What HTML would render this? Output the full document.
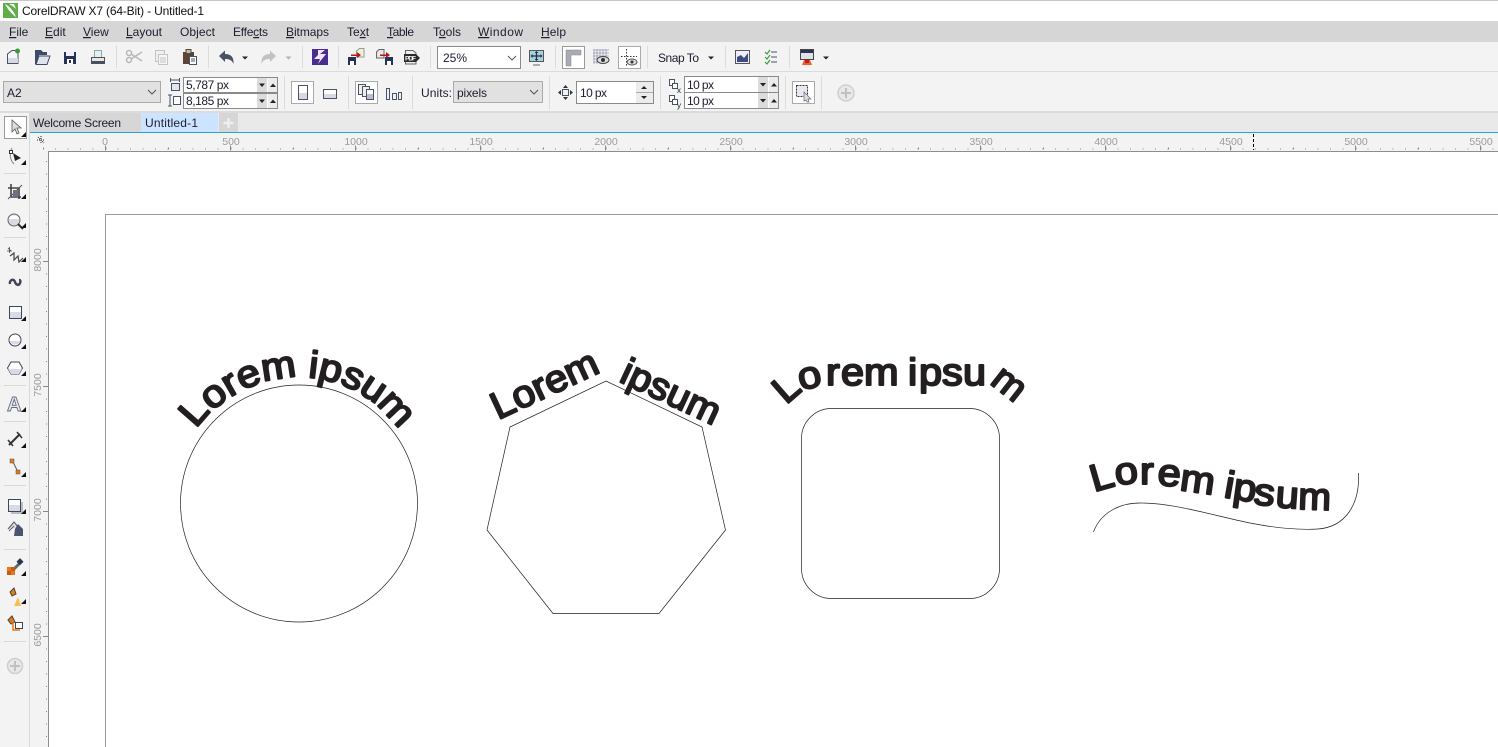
<!DOCTYPE html>
<html><head><meta charset="utf-8"><title>CorelDRAW X7</title>
<style>
html,body{margin:0;padding:0;background:#fff;overflow:hidden;width:1498px;height:747px}
svg{display:block;font-family:"Liberation Sans",sans-serif;overflow:hidden}
.m{font-size:12px;fill:#1c1c30}
.r{font-size:10.500px;fill:#9b9b9b;text-anchor:middle}
.t{font-size:12px;fill:#1c1c30}
.big text{font-size:38px;fill:#231f20;stroke:#231f20;stroke-width:2;stroke-linejoin:round;stroke-linecap:round}
.bm text{text-anchor:middle}
.s{stroke:#dcdcdc;stroke-width:1}
</style></head><body>
<svg width="1498" height="747" viewBox="0 0 1498 747" xmlns="http://www.w3.org/2000/svg">
<rect width="1498" height="747" fill="#fff"/>
<!-- chrome bands -->
<rect y="0" width="1498" height="1" fill="#c8c8c8"/>
<rect y="21" width="1498" height="21" fill="#d6d6d6"/>
<rect y="42" width="1498" height="29" fill="#f3f3f3"/>
<rect y="71" width="1498" height="1" fill="#dcdcdc"/>
<rect y="72" width="1498" height="40" fill="#f3f3f3"/>
<rect y="111" width="1498" height="2" fill="#dcdcdc"/>
<rect y="113" width="1498" height="19" fill="#e9e9e9"/>
<rect y="132" x="30" width="1468" height="1" fill="#1ea5e8"/>
<rect y="133" x="30" width="1468" height="18" fill="#f3f3f3"/>
<rect y="113" x="0" width="29" height="634" fill="#f3f3f3"/>
<rect y="113" x="29" width="1" height="634" fill="#d8d8d8"/>
<rect y="133" x="30" width="18" height="614" fill="#f3f3f3"/>
<rect y="151" x="48" width="1450" height="1" fill="#8c8c8c"/>
<rect y="151" x="48" width="1" height="596" fill="#8c8c8c"/>

<!-- title -->
<rect x="3" y="3" width="15" height="15" fill="#5fae4a"/>
<path d="M5 4 C9 6 14 11 16 17 C12 14 8 10 5 4Z M9 4 L14 4 L16 9 C14 7 11 5 9 4Z" fill="#fff"/>
<text x="22" y="15" class="t" textLength="182" style="fill:#111">CorelDRAW X7 (64-Bit) - Untitled-1</text>

<!-- menu -->
<text x="9" y="36" class="m"><tspan text-decoration="underline">F</tspan>ile</text>
<text x="45" y="36" class="m"><tspan text-decoration="underline">E</tspan>dit</text>
<text x="83" y="36" class="m"><tspan text-decoration="underline">V</tspan>iew</text>
<text x="126" y="36" class="m" textLength="36"><tspan text-decoration="underline">L</tspan>ayout</text>
<text x="180" y="36" class="m" textLength="35">Ob<tspan text-decoration="underline">j</tspan>ect</text>
<text x="233" y="36" class="m" textLength="35">Effe<tspan text-decoration="underline">c</tspan>ts</text>
<text x="286" y="36" class="m" textLength="43"><tspan text-decoration="underline">B</tspan>itmaps</text>
<text x="347" y="36" class="m">Te<tspan text-decoration="underline">x</tspan>t</text>
<text x="387" y="36" class="m" textLength="27"><tspan text-decoration="underline">T</tspan>able</text>
<text x="433" y="36" class="m" textLength="28">T<tspan text-decoration="underline">o</tspan>ols</text>
<text x="478" y="36" class="m" textLength="45"><tspan text-decoration="underline">W</tspan>indow</text>
<text x="541" y="36" class="m" textLength="25"><tspan text-decoration="underline">H</tspan>elp</text>

<!-- toolbar separators -->
<path class="s" d="M116.500 46V68M208.500 46V68M302.500 46V68M338.500 46V68M430.500 46V68M555.500 46V68M647.500 46V68M725.500 46V68M789.500 46V68"/>
<path class="s" d="M284.500 76V109M348.500 76V109M412.500 76V109M549.500 76V109M660.500 76V109M785.500 76V109M821.500 76V109"/>

<!-- new -->
<path d="M7.500 63.500V54L12 50.500H18V63.500Z" fill="#f6f6f6" stroke="#4a5268"/><rect x="8" y="58" width="10" height="5" fill="#d6d8e2"/><circle cx="17.500" cy="51" r="2.500" fill="#3d9a2e"/>
<!-- open -->
<path d="M35 64V50H41L43 52H47V55H39L36 64Z" fill="#3f4a66"/><path d="M36 64.500L39 56H50L47 64.500Z" fill="#dfe3ee" stroke="#3f4a66"/>
<!-- save -->
<rect x="64" y="52" width="12" height="12" fill="#26325a"/><rect x="66" y="52" width="8" height="4" fill="#eef"/><rect x="67" y="59" width="6" height="5" fill="#fff"/><rect x="69" y="60" width="2" height="3" fill="#26325a"/>
<!-- print -->
<rect x="94.500" y="50.500" width="7" height="7" fill="#e5f0f0" stroke="#8aa"/><rect x="91.500" y="57.500" width="13" height="6" fill="#ece7d8" stroke="#4a5268"/><rect x="92" y="61" width="12" height="2.500" fill="#454e66"/>
<!-- cut -->
<circle cx="129" cy="60" r="2.500" fill="none" stroke="#b8b8b8" stroke-width="1.500"/><circle cx="129" cy="53" r="2.500" fill="none" stroke="#b8b8b8" stroke-width="1.500"/><path d="M131 54L142 61M131 59L142 52" stroke="#b8b8b8" stroke-width="1.500"/>
<!-- copy -->
<rect x="155.500" y="50.500" width="9" height="11" fill="#f0f0f0" stroke="#c4c4c4"/><rect x="158.500" y="54.500" width="9" height="10" fill="#f6f6f6" stroke="#c4c4c4"/><path d="M160 58H166M160 60H166M160 62H166" stroke="#c4c4c4"/>
<!-- paste -->
<rect x="183" y="52" width="11" height="12" fill="#5c4631"/><rect x="186" y="49.500" width="5" height="4" fill="#b8c0c0" stroke="#5c4631"/><rect x="189.500" y="56.500" width="7" height="8" fill="#fff" stroke="#4a5268"/><path d="M191 59H195M191 61H195" stroke="#4a5268"/>
<!-- undo -->
<path d="M219 56L225 50.500V54C231 54 234 57 233.500 64C232 60 229 59 225 59V62Z" fill="#4a5268"/>
<path d="M242 56.500h6l-3 3z" fill="#222"/>
<!-- redo -->
<path d="M276 56L270 50.500V54C264 54 261 57 261.500 64C263 60 266 59 270 59V62Z" fill="#c2c2c2"/>
<path d="M285.500 56.500h6l-3 3z" fill="#b0b0b0"/>
<!-- purple -->
<rect x="312" y="49" width="16" height="16" fill="#4a2b8e"/><path d="M318 50H325L320 54H326L318 64L320 59H314L318 55Z" fill="#efe6f8"/>
<!-- import -->
<path d="M356.500 57V51L359.500 48.500H364V57Z" fill="#eef0d8" stroke="#999"/><rect x="348" y="57" width="8" height="8" fill="#26325a"/><rect x="350" y="61" width="4" height="4" fill="#fff"/><path d="M351 54.500H357V52L361 55L357 58V56H351Z" fill="#b51818"/>
<!-- export -->
<path d="M376.500 58V52L379 49.500H384V58Z" fill="#e8e8e8" stroke="#666"/><rect x="385" y="57" width="8" height="8" fill="#26325a"/><rect x="387" y="61" width="4" height="4" fill="#fff"/><path d="M380 54.500H386V52L390 55L386 58V56H380Z" fill="#b51818"/>
<!-- pdf -->
<path d="M405.500 64V50.500H413L416 53V64Z" fill="#eee" stroke="#666"/><path d="M404 54H416L420 58L416 62H404Z" fill="#2a2a2a"/><text x="405" y="60.500" font-size="6.500" font-weight="bold" fill="#fff" textLength="11">PDF</text>
<!-- zoom combo -->
<rect x="437.500" y="46.500" width="83" height="22" fill="#fff" stroke="#8a8a8a"/>
<text x="443" y="62" class="t">25%</text>
<path d="M508 56L512 60L516 56" fill="none" stroke="#555"/>
<!-- fullscreen -->
<rect x="529.500" y="50.500" width="14" height="11" fill="#a5d3df" stroke="#555"/><path d="M533 65H540" stroke="#666"/><path d="M536.500 52V60M531.500 56H541.500" stroke="#24324e" stroke-width="1.300"/><path d="M536.500 51l-2 2h4zM536.500 61l-2-2h4zM530.500 56l2-2v4zM542.500 56l-2-2v4z" fill="#24324e"/>
<!-- ruler button -->
<rect x="562.500" y="46.500" width="22" height="22" fill="#fff" stroke="#9a9a9a"/><path d="M566 50H581V55H571V66H566Z" fill="#a7abb8" stroke="#888" stroke-width=".5"/>
<!-- grid eye -->
<path d="M593 50H609M593 53H609M593 56H609M593 59H605M593 62H600M594 49V64M597 49V64M600 49V64M603 49V60M606 49V60" stroke="#9a9cb8" stroke-width=".8"/><ellipse cx="603" cy="60" rx="6" ry="3.500" fill="#ddd" stroke="#444"/><circle cx="603" cy="60" r="2" fill="#333"/>
<!-- guides -->
<rect x="618.500" y="46.500" width="22" height="22" fill="#fff" stroke="#aaa"/><path d="M626.500 49V66M621 56.500H637" stroke="#333" stroke-dasharray="1.500 1.500"/><ellipse cx="632" cy="62" rx="5" ry="3" fill="#ddd" stroke="#555"/><circle cx="632" cy="62" r="1.500" fill="#333"/>
<!-- snap -->
<text x="658" y="62" class="t" textLength="41">Snap To</text>
<path d="M708 56.500h6l-3 3z" fill="#222"/>
<!-- options -->
<rect x="735.500" y="50.500" width="14" height="13" fill="#eef" stroke="#555"/><path d="M737 62V57L741 55L744 58L748 53V62Z" fill="#3f4a86"/>
<!-- checklist -->
<path d="M765 52L767 54L770 50M765 57L767 59L770 55M765 62L767 64L770 60" fill="none" stroke="#3f9a3a" stroke-width="1.200"/><path d="M771 52H777M771 57H777M771 62H777" stroke="#4a5268"/>
<!-- paint -->
<rect x="800.500" y="49.500" width="13" height="10" fill="#e0e0e8" stroke="#444"/><rect x="801" y="50" width="12" height="3" fill="#2c3556"/><path d="M804 60H810L812 65H802Z" fill="#e8602a"/><path d="M805 60H809V63H805Z" fill="#c9181c"/>
<path d="M823 56.500h6l-3 3z" fill="#222"/>

<!-- property bar -->
<rect x="3.500" y="81.500" width="157" height="21" fill="#e1e1e1" stroke="#aaa"/>
<text x="7" y="97" class="t">A2</text>
<path d="M148 90L152 94L156 90" fill="none" stroke="#555"/>
<!-- width/height icons -->
<path d="M170.500 80H179.500M170.500 78V82M179.500 78V82" stroke="#4a5268" fill="none"/><rect x="171.500" y="83.500" width="8" height="7" fill="#e4e4ec" stroke="#4a5268"/>
<path d="M170 95V106M168 95H172M168 106H172" stroke="#4a5268" fill="none"/><rect x="173.500" y="96.500" width="7" height="8" fill="#fff" stroke="#4a5268"/>
<!-- size inputs -->
<rect x="183.500" y="77.500" width="94" height="15" fill="#fff" stroke="#8a8a8a"/><rect x="183.500" y="93.500" width="94" height="15" fill="#fff" stroke="#8a8a8a"/>
<text x="186" y="89" class="t" textLength="43">5,787 px</text><text x="186" y="105" class="t" textLength="43">8,185 px</text>
<rect x="257" y="78" width="10" height="14" fill="#dcdcdc"/><rect x="268" y="78" width="9" height="14" fill="#ececec"/><rect x="257" y="94" width="10" height="14" fill="#dcdcdc"/><rect x="268" y="94" width="9" height="14" fill="#ececec"/>
<path d="M259 83.500h6l-3 3.500zM270 87h6l-3-3.500zM259 99.500h6l-3 3.500zM270 103h6l-3-3.500z" fill="#222"/>
<!-- portrait/landscape -->
<rect x="291.500" y="81.500" width="22" height="22" fill="#fff" stroke="#aaa"/><rect x="298.500" y="85.500" width="9" height="14" fill="#fff" stroke="#4a5268"/><rect x="299" y="93" width="8" height="6" fill="#d8d8e4"/>
<rect x="323.500" y="89.500" width="13" height="9" fill="#fff" stroke="#4a5268"/><rect x="324" y="94" width="12" height="4" fill="#d8d8e4"/>
<!-- pages btn -->
<rect x="355.500" y="81.500" width="22" height="22" fill="#fff" stroke="#aaa"/><rect x="358.500" y="84.500" width="7" height="10" fill="#eee" stroke="#4a5268"/><rect x="362.500" y="86.500" width="7" height="10" fill="#eee" stroke="#4a5268"/><rect x="366.500" y="89.500" width="7" height="10" fill="#fff" stroke="#4a5268"/><rect x="367" y="94" width="6" height="5" fill="#b8bccc"/>
<rect x="386.500" y="88.500" width="3" height="11" fill="#f0f0f0" stroke="#4a5268"/><rect x="392.500" y="93.500" width="4" height="6" fill="#f0f0f0" stroke="#4a5268"/><rect x="398.500" y="92.500" width="3" height="7" fill="#f0f0f0" stroke="#4a5268"/>
<!-- units -->
<text x="421" y="97" class="t" textLength="31">Units:</text>
<rect x="453.500" y="81.500" width="89" height="21" fill="#e1e1e1" stroke="#aaa"/>
<text x="457" y="97" class="t" textLength="30">pixels</text>
<path d="M530 90L534 94L538 90" fill="none" stroke="#555"/>
<!-- nudge -->
<rect x="562.500" y="89.500" width="6" height="6" fill="#f3f3f3" stroke="#4a5268"/><path d="M565.500 85l-2.500 3h5zM565.500 100l-2.500-3h5zM558 92.500l3-2.500v5zM573 92.500l-3-2.500v5z" fill="#333"/>
<rect x="576.500" y="81.500" width="77" height="22" fill="#fff" stroke="#8a8a8a"/>
<text x="580" y="97" class="t" textLength="27">10 px</text>
<rect x="636" y="82" width="17" height="21" fill="#ececec"/><path d="M636 92.500H653" stroke="#aaa"/><path d="M641 89h6l-3-3zM641 96h6l-3 3z" fill="#222"/>
<!-- duplicate -->
<rect x="669.500" y="79.500" width="5" height="6" fill="#fff" stroke="#4a5268"/><rect x="672.500" y="83.500" width="5" height="5" fill="#fff" stroke="#4a5268"/><text x="677" y="93" font-size="8" fill="#222">x</text>
<rect x="669.500" y="95.500" width="5" height="6" fill="#fff" stroke="#4a5268"/><rect x="672.500" y="99.500" width="5" height="5" fill="#fff" stroke="#4a5268"/><text x="677" y="108" font-size="8" fill="#222">y</text>
<rect x="684.500" y="76.500" width="94" height="16" fill="#fff" stroke="#8a8a8a"/><rect x="684.500" y="92.500" width="94" height="16" fill="#fff" stroke="#8a8a8a"/>
<text x="687" y="89" class="t" textLength="27">10 px</text><text x="687" y="105" class="t" textLength="27">10 px</text>
<rect x="758" y="77" width="10" height="15" fill="#dcdcdc"/><rect x="769" y="77" width="9" height="15" fill="#ececec"/><rect x="758" y="93" width="10" height="15" fill="#dcdcdc"/><rect x="769" y="93" width="9" height="15" fill="#ececec"/>
<path d="M760 83h6l-3 3.500zM771 86.500h6l-3-3.500zM760 99h6l-3 3.500zM771 102.500h6l-3-3.500z" fill="#222"/>
<!-- treat as -->
<rect x="792.500" y="81.500" width="22" height="22" fill="#fff" stroke="#aaa"/><rect x="796.500" y="85.500" width="11" height="11" fill="#e8e8f0" stroke="#333" stroke-dasharray="2 1"/><path d="M804 92L811 99L808 99L809 102L807 102L806 100L804 101Z" fill="#ddd" stroke="#667" stroke-width=".7"/>
<!-- plus -->
<circle cx="846" cy="93" r="8" fill="#e8e8e8" stroke="#cfcfcf" stroke-width="1.500"/><path d="M846 88V98M841 93H851" stroke="#c0c0c0" stroke-width="2"/>

<!-- tabs -->
<rect x="30" y="113" width="111" height="19" fill="#d6d6d6"/>
<rect x="141" y="113" width="77" height="19" fill="#cce4ff"/>
<rect x="219" y="113" width="19" height="19" fill="#d6d6d6"/>
<path d="M228.500 118V128M223.500 123H233.500" stroke="#eeeeee" stroke-width="2.500"/>
<text x="33" y="127" class="t" textLength="88">Welcome Screen</text>
<text x="145" y="127" class="t" textLength="53">Untitled-1</text>

<!-- ruler origin -->
<path d="M37 140H45M41 136V144M38 137L44 143" stroke="#222" stroke-dasharray="1 1" fill="none"/>

<!-- horizontal ruler -->
<text class="r" x="105" y="145">0</text><text class="r" x="231" y="145">500</text><text class="r" x="356" y="145">1000</text><text class="r" x="481" y="145">1500</text><text class="r" x="606" y="145">2000</text><text class="r" x="731" y="145">2500</text><text class="r" x="856" y="145">3000</text><text class="r" x="981" y="145">3500</text><text class="r" x="1106" y="145">4000</text><text class="r" x="1231" y="145">4500</text><text class="r" x="1356" y="145">5000</text><text class="r" x="1481" y="145">5500</text>
<path d="M55 149H1498" stroke="#888" stroke-width="1" stroke-dasharray="1 11.500" fill="none"/>
<path d="M43 148.500H1498" stroke="#888" stroke-width="2" stroke-dasharray="1 61.500" fill="none"/>
<path d="M105 148H1498" stroke="#888" stroke-width="5" stroke-dasharray="1 124" fill="none"/>
<path d="M1253.500 134V150" stroke="#000" stroke-dasharray="3 2"/>

<!-- vertical ruler -->
<text class="r" transform="translate(41,260) rotate(-90)">8000</text>
<text class="r" transform="translate(41,385) rotate(-90)">7500</text>
<text class="r" transform="translate(41,510) rotate(-90)">7000</text>
<text class="r" transform="translate(41,635) rotate(-90)">6500</text>
<path d="M46.500 161V747" stroke="#888" stroke-dasharray="1 11.500" fill="none"/>
<path d="M43 261.500H48M43 386.500H48M43 511.500H48M43 636.500H48" stroke="#888"/>

<!-- page outline -->
<path d="M105.500 747V214.500H1498" fill="none" stroke="#9a9a9a"/>

<!-- shapes -->
<circle cx="299" cy="503.500" r="118.500" fill="none" stroke="#231f20" stroke-width=".7"/>
<path d="M606 381L702 427L725.500 530L659 613.500H553L487 530L510 427Z" fill="none" stroke="#231f20" stroke-width=".7"/>
<rect x="801.500" y="408.500" width="198" height="190" rx="30" ry="30" fill="none" stroke="#231f20" stroke-width=".7"/>
<path d="M1093.500 532C1100 514 1118 503 1140 503C1175 503 1215 516 1250 523C1275 528 1300 530 1318 529C1345 527 1360 505 1358.500 473" fill="none" stroke="#231f20" stroke-width=".7"/>

<!-- circle text -->
<g class="big bm">
<text transform="translate(203.200,420) rotate(-48.800) scale(1.090,1)">L</text>
<text transform="translate(220.700,404.200) rotate(-38.400) scale(1.090,1)">o</text>
<text transform="translate(236,393.900) rotate(-30) scale(1.090,1)">r</text>
<text transform="translate(252.400,386) rotate(-21.700) scale(1.090,1)">e</text>
<text transform="translate(280,378.500) rotate(-8.700) scale(1.090,1)">m</text>
<text transform="translate(312.300,377.800) rotate(6.500) scale(1.090,1)">i</text>
<text transform="translate(328,380.700) rotate(13.800) scale(1.090,1)">p</text>
<text transform="translate(348.600,387.600) rotate(23.700) scale(1.090,1)">s</text>
<text transform="translate(367.200,398) rotate(33.600) scale(1.090,1)">u</text>
<text transform="translate(388,416.600) rotate(46.700) scale(1.090,1)">m</text>
</g>
<!-- heptagon text -->
<g class="big">
<text transform="translate(498,420) rotate(-25) scale(1.060,1)">Lorem</text>
<text transform="translate(618,381) rotate(25) scale(1.040,1)">ipsum</text>
</g>
<!-- rounded square text -->
<g class="big">
<text transform="translate(786,405) rotate(-41) scale(1.060,1)">L</text>
<text transform="translate(801,390.500) rotate(-14) scale(1.090,1)">o</text>
<text transform="translate(826,385) scale(1.090,1)">r</text>
<text transform="translate(841,385) scale(1.090,1)">e</text>
<text transform="translate(864,385) scale(1.090,1)">m</text>
<text transform="translate(908,385) scale(1.090,1)">i</text>
<text transform="translate(919,385) scale(1.090,1)">p</text>
<text transform="translate(942,385) scale(1.090,1)">s</text>
<text transform="translate(963,385) scale(1.090,1)">u</text>
<text transform="translate(989,383) rotate(38) scale(1.040,1)">m</text>
</g>
<!-- wave text -->
<g class="big">
<text transform="translate(1094,492) rotate(-16) scale(1.090,1)">L</text>
<text transform="translate(1116,485) rotate(-6) scale(1.090,1)">o</text>
<text transform="translate(1140,484) scale(1.090,1)">r</text>
<text transform="translate(1157,485) rotate(4) scale(1.090,1)">e</text>
<text transform="translate(1179,490) rotate(8) scale(1.090,1)">m</text>
<text transform="translate(1223,497) rotate(10) scale(1.090,1)">i</text>
<text transform="translate(1232,499) rotate(8) scale(1.090,1)">p</text>
<text transform="translate(1253,504) rotate(6) scale(1.090,1)">s</text>
<text transform="translate(1275,507) rotate(4) scale(1.090,1)">u</text>
<text transform="translate(1298,509) rotate(2) scale(1.030,1)">m</text>
</g>

<!-- toolbox -->
<rect x="4.500" y="116.500" width="22" height="22" fill="#fff" stroke="#999"/>
<path d="M12 120L12 132L15 129L17 134L19 133L17 128L21 128Z" fill="#ddd" stroke="#555" stroke-width=".8"/>
<path d="M26 132v5h-5z" fill="#111"/>
<!-- shape -->
<path d="M12 148C9 153 10 160 14 164" fill="none" stroke="#888"/><rect x="9.500" y="150.500" width="3" height="3" fill="#fff" stroke="#333"/><path d="M13 153L21 158L15 161Z" fill="#222"/><path d="M26 160v5h-5z" fill="#111"/>
<!-- crop -->
<path d="M11 184V197H21M8 188H19V199" fill="none" stroke="#444" stroke-width="1.600"/><path d="M8 199L22 185" stroke="#555"/><rect x="13" y="190" width="5" height="6" fill="#6a7088"/><path d="M26 194v5h-5z" fill="#111"/>
<!-- zoom -->
<circle cx="14" cy="220" r="6" fill="#d8dae4" stroke="#666"/><path d="M8.500 219H19.500A6 6 0 0 0 8.500 219" fill="#fff"/><path d="M18 224L23 229" stroke="#333" stroke-width="2"/><path d="M26 223v5h-5z" fill="#111"/>
<path d="M4 173.500H26M4 237.500H26M4 385.500H26M4 421.500H26M4 485.500H26M4 549.500H26M4 641.500H26" stroke="#d8d8d8"/>
<!-- freehand -->
<path d="M8 248L11 251M7 251H12M9.500 247V253" stroke="#444" stroke-width=".8"/><path d="M10 256L14 253L14 260L18 256L19 262L23 258" fill="none" stroke="#444" stroke-width="1.200"/><path d="M26 257v5h-5z" fill="#111"/>
<!-- artistic -->
<path d="M10 284C9 280 14 278 15 282C16 285 19 286 20 283C21 281 20 280 19 280" fill="none" stroke="#3f4458" stroke-width="2.500"/>
<!-- rect -->
<rect x="9.500" y="306.500" width="12" height="12" fill="#fff" stroke="#3f4458"/><rect x="10" y="312" width="11" height="6" fill="#d8dae6"/><path d="M26 316v5h-5z" fill="#111"/>
<!-- ellipse -->
<circle cx="15" cy="340" r="6" fill="#fff" stroke="#3f4458"/><path d="M9.500 341H20.500A6 6 0 0 1 9.500 341" fill="#d8dae6"/><path d="M26 344v5h-5z" fill="#111"/>
<!-- polygon -->
<path d="M11 362H19L22.500 368L19 374H11L7.500 368Z" fill="#fff" stroke="#3f4458"/><path d="M8 369H22L19 374H11Z" fill="#d8dae6"/><path d="M26 371v5h-5z" fill="#111"/>
<!-- text -->
<text x="7" y="411" font-size="20" font-weight="bold" fill="#e8e8ee" stroke="#666b80" stroke-width=".9">A</text><path d="M26 407v5h-5z" fill="#111"/>
<!-- dimension -->
<path d="M9 445L20 434" stroke="#333" stroke-width="2"/><path d="M8 440L13 446M17 432L22 438" stroke="#333" stroke-width="1.500"/><path d="M26 443v5h-5z" fill="#111"/>
<!-- connector -->
<path d="M13 462L18 472" stroke="#555"/><rect x="10" y="459" width="4" height="4" fill="#e57a10" stroke="#555" stroke-width=".5"/><rect x="16" y="470" width="4" height="4" fill="#e57a10" stroke="#555" stroke-width=".5"/><path d="M26 472v5h-5z" fill="#111"/>
<!-- shadow -->
<rect x="11" y="502" width="12" height="12" fill="#b8bccc"/><rect x="8.500" y="499.500" width="12" height="12" fill="#fff" stroke="#3f4458"/><rect x="9" y="505" width="11" height="6" fill="#d8dae6"/><path d="M26 509v5h-5z" fill="#111"/>
<!-- transparency -->
<path d="M8 529L14 522L19 528" fill="#ddd" stroke="#556"/><path d="M9 531L14 526" stroke="#666"/><path d="M15 529L18 524L23 529V536H14Z" fill="#4a5470"/>
<!-- eyedropper -->
<path d="M13 570L20 563" stroke="#666" stroke-width="3"/><rect x="18" y="559" width="5" height="5" fill="#2c3556" transform="rotate(45 20 561)"/><rect x="7" y="567" width="8" height="8" fill="#e57a10"/><path d="M7 571h4v4h-4zM11 567h4v4h-4z" fill="#c9581c"/><path d="M26 571v5h-5z" fill="#111"/>
<!-- interactive fill -->
<path d="M10 592L14 588L16 594L12 596Z" fill="#e57a10" stroke="#444"/><path d="M14 606L18 597L21 606Z" fill="#f5c050"/><path d="M26 599v5h-5z" fill="#111"/>
<!-- smart fill -->
<path d="M8 620L12 616L15 622L11 624Z" fill="#e57a10" stroke="#444"/><rect x="15.500" y="622.500" width="7" height="6" fill="#fff" stroke="#3f4458"/><path d="M13 620V630H20" fill="none" stroke="#e57a10" stroke-width="1.500"/>
<!-- plus -->
<circle cx="15" cy="666" r="7.500" fill="#e8e8e8" stroke="#cfcfcf" stroke-width="1.500"/><path d="M15 661V671M10 666H20" stroke="#c0c0c0" stroke-width="2"/>
</svg>
</body></html>
